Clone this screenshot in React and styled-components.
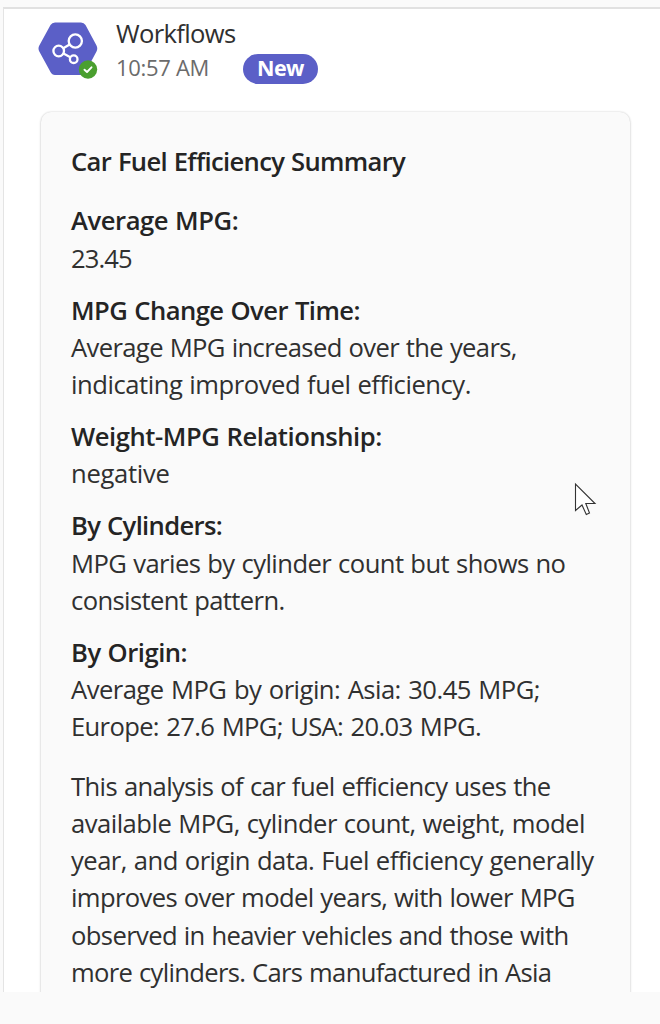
import React from 'react';
import styled, { createGlobalStyle } from 'styled-components';

const Global = createGlobalStyle`
  * { box-sizing: border-box; }
  body { margin: 0; background: #fafafa; font-family: "Open Sans", "Noto Sans", sans-serif; }
`;

const Screen = styled.div`
  height: 1024px;
  overflow: hidden;
  background: #fafafa;
  padding: 7px 0 32px 3px;
`;

const Pane = styled.main`
  height: 985px;
  overflow: hidden;
  background: #fff;
  border-top: 2px solid #e1e1e1;
  border-left: 1px solid #e4e4e4;
  padding: 11px 0 0 34px;
`;

const Header = styled.header`
  display: flex;
  height: 92px;
`;

const Avatar = styled.svg`
  display: block;
  width: 62px;
  height: 60px;
  flex: none;
`;

const Meta = styled.div`
  padding-left: 16px;
`;

const Line = styled.div`
  white-space: nowrap;
  font-size: 25.6px;
  font-weight: ${(p) => (p.$bold ? 600 : 400)};
  line-height: 37.2px;
  letter-spacing: ${(p) => p.$track || 0}px;
  word-spacing: ${(p) => p.$word ?? 0.8}px;
  color: ${(p) => (p.$bold ? '#242424' : '#303030')};
`;

const Sender = styled.div`
  font-size: 25.6px;
  line-height: 32px;
  margin-top: -2px;
  letter-spacing: -0.65px;
  color: #303030;
`;

const TimeRow = styled.div`
  display: flex;
  align-items: center;
  height: 31px;
  margin-top: 3px;
`;

const Time = styled.span`
  width: 127px;
  font-size: 22px;
  line-height: 30px;
  margin-top: -3px;
  letter-spacing: -0.3px;
  color: #6b6b6b;
`;

const Badge = styled.span`
  width: 75px;
  height: 30px;
  border-radius: 15px;
  background: #5b5fc7;
  color: #fff;
  font-size: 21.5px;
  font-weight: 700;
  line-height: 28px;
  letter-spacing: -0.6px;
  text-align: center;
`;

const Card = styled.article`
  width: 589px;
  height: 960px;
  margin-left: 3px;
  padding: 30.8px 0 0 30px;
  background: #fafafa;
  border-radius: 10px;
  box-shadow: 0 0 2px rgba(0, 0, 0, 0.18), 0 1px 3px rgba(0, 0, 0, 0.13);
`;

const Group = styled.section`
  margin-bottom: ${(p) => p.$gap}px;
`;

const Pointer = styled.svg`
  position: absolute;
  left: 574px;
  top: 482px;
  width: 23px;
  height: 35px;
`;

const groups = [
  { gap: 22.3, lines: [['Car Fuel Efficiency Summary', -0.67, true]] },
  { gap: 14.9, lines: [['Average MPG:', -0.44, true], ['23.45', -0.9]] },
  {
    gap: 14.9,
    lines: [
      ['MPG Change Over Time:', -0.53, true],
      ['Average MPG increased over the years,', -0.63],
      ['indicating improved fuel efficiency.', -0.46],
    ],
  },
  { gap: 14.9, lines: [['Weight-MPG Relationship:', -0.43, true], ['negative', -0.3]] },
  {
    gap: 14.9,
    lines: [
      ['By Cylinders:', -0.66, true],
      ['MPG varies by cylinder count but shows no', -0.56],
      ['consistent pattern.', -0.62],
    ],
  },
  {
    gap: 22.3,
    lines: [
      ['By Origin:', -0.48, true],
      ['Average MPG by origin: Asia: 30.45 MPG;', -0.54, false, 1.4],
      ['Europe: 27.6 MPG; USA: 20.03 MPG.', -0.66, false, 1.4],
    ],
  },
  {
    gap: 0,
    lines: [
      ['This analysis of car fuel efficiency uses the', -0.6],
      ['available MPG, cylinder count, weight, model', -0.51],
      ['year, and origin data. Fuel efficiency generally', -0.52],
      ['improves over model years, with lower MPG', -0.63],
      ['observed in heavier vehicles and those with', -0.62],
      ['more cylinders. Cars manufactured in Asia', -0.68],
    ],
  },
];

function WorkflowAvatar() {
  return (
    <Avatar viewBox="38 20 62 60">
      <path
        d="M55 22.5H81Q84 22.5 85.5 25L96.5 45.5Q98 48.5 96.5 51.5L85.5 72Q84 75 81 75H55Q52 75 50.5 72L39.3 51.5Q37.7 48.5 39.3 45.5L50.5 25Q52 22.5 55 22.5Z"
        fill="#5b5fc7"
      />
      <g fill="none" stroke="#fff" strokeWidth="2.3">
        <circle cx="75.3" cy="41" r="6.6" />
        <circle cx="58.7" cy="51" r="5.3" />
        <circle cx="73.7" cy="59.2" r="3.8" />
        <path d="M63.3 48.3L69.6 44.5M63.5 53.5L70.3 57.2" />
      </g>
      <circle cx="88" cy="69.5" r="9.2" fill="#4a9f2f" />
      <path d="M84.5 69.7L87 72L91.5 67.3" fill="none" stroke="#fff" strokeWidth="1.9" strokeLinecap="round" strokeLinejoin="round" />
    </Avatar>
  );
}

export default function App() {
  return (
    <Screen>
      <Global />
      <Pane>
        <Header>
          <WorkflowAvatar />
          <Meta>
            <Sender>Workflows</Sender>
            <TimeRow>
              <Time>10:57 AM</Time>
              <Badge>New</Badge>
            </TimeRow>
          </Meta>
        </Header>
        <Card>
          {groups.map((group, i) => (
            <Group key={i} $gap={group.gap}>
              {group.lines.map(([text, track, bold, word]) => (
                <Line key={text} $track={track} $bold={bold} $word={word}>
                  {text}
                </Line>
              ))}
            </Group>
          ))}
        </Card>
      </Pane>
      <Pointer viewBox="574 482 23 35">
        <path
          d="M575.5 484V510.5L582 505L586.3 514.5L589.5 513L585.8 503.5H595Z"
          fill="#fff"
          stroke="#333"
          strokeWidth="1.1"
        />
      </Pointer>
    </Screen>
  );
}
